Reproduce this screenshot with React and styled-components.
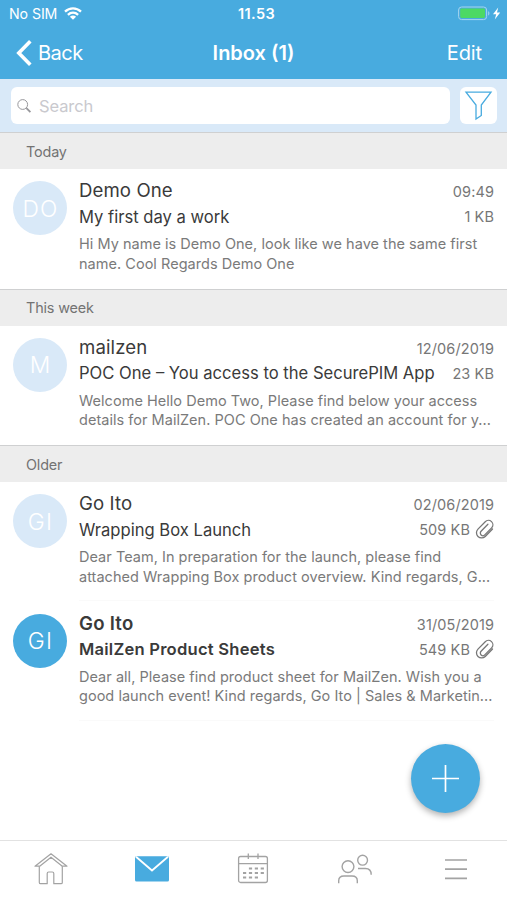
import React from 'react';
import styled, { createGlobalStyle } from 'styled-components';

const GlobalStyle = createGlobalStyle`
    * {
        box-sizing: border-box;
    }
    body {
        margin: 0;
        background: #fff;
        font-family: Inter, 'Liberation Sans', sans-serif;
    }
`;

const Screen = styled.div`
    position: relative;
    display: flex;
    flex-direction: column;
    width: 507px;
    height: 900px;
    overflow: hidden;
    background: #fff;
`;

const Header = styled.header`
    height: 79px;
    color: #fff;
    background: #48abdf;
`;

const StatusBar = styled.div`
    display: grid;
    grid-template-columns: 1fr auto 1fr;
    align-items: center;
    height: 27px;
    padding: 0 6px 0 9px;
    font-size: 14.5px;
`;

const Carrier = styled.div`
    display: flex;
    align-items: center;
    gap: 7px;
    font-size: 14.2px;
    letter-spacing: -0.1px;
`;

const Clock = styled.div`
    padding-left: 3px;
    font-weight: 600;
    font-size: 14.5px;
    letter-spacing: 0.4px;
`;

const Power = styled.div`
    display: flex;
    justify-content: flex-end;
`;

const NavBar = styled.nav`
    display: grid;
    grid-template-columns: 1fr auto 1fr;
    align-items: center;
    height: 52px;
    padding: 0 25px 0 16px;
`;

const NavButton = styled.button`
    display: flex;
    align-items: center;
    justify-self: ${props => props.$end ? 'end' : 'start'};
    gap: 6px;
    padding: 0;
    border: none;
    background: none;
    color: #fff;
    font-family: inherit;
    font-size: 20px;
    letter-spacing: ${props => props.$end ? '-0.1px' : '-0.5px'};
`;

const Title = styled.h1`
    margin: 0;
    padding-left: 9px;
    font-size: 20px;
    font-weight: 600;
    letter-spacing: 0;
`;

const SearchBar = styled.div`
    display: flex;
    gap: 10px;
    height: 53px;
    padding: 8px 10px 8px 11px;
    background: #d9e9f8;
`;

const SearchField = styled.label`
    display: flex;
    flex: 1;
    align-items: center;
    gap: 8px;
    padding-left: 6px;
    border-radius: 6px;
    background: #fff;
    color: #c9c9ce;
    font-size: 16.5px;
    letter-spacing: -0.1px;
`;

const FilterButton = styled.button`
    width: 37px;
    padding: 0;
    border: none;
    border-radius: 6px;
    background: #fff;
    color: #48abdf;
`;

const SectionHeader = styled.h2`
    display: flex;
    align-items: center;
    height: 37px;
    margin: 0;
    padding: 0 0 0 26px;
    border-top: 1.5px solid #cfd0d1;
    background: #ededed;
    color: #737373;
    font-size: 14.4px;
    font-weight: 400;
    letter-spacing: -0.15px;
`;

const Row = styled.article`
    display: flex;
    gap: 12px;
    height: 119.5px;
    padding: 12px 13px 0;
`;

const Avatar = styled.div`
    display: flex;
    flex: none;
    align-items: center;
    justify-content: center;
    width: 54px;
    height: 54px;
    padding-left: 1px;
    border-radius: 50%;
    background: ${props => props.$unread ? '#48abdf' : '#d9e9f8'};
    color: #fff;
    font-size: 22.8px;
    font-weight: 350;
    letter-spacing: 1.2px;
`;

const Body = styled.div`
    flex: 1;
    min-width: 0;
    height: 107px;
    border-bottom: ${props => props.$line ? '1px solid #fafafa' : 'none'};
`;

const Line = styled.div`
    display: flex;
    align-items: center;
    justify-content: space-between;
    height: ${props => props.$tall ? '18px' : '35px'};
    white-space: nowrap;
`;

const Sender = styled.span`
    color: #3a3a3a;
    font-size: 18.6px;
    font-weight: ${props => props.$unread ? 600 : 400};
    letter-spacing: ${props => props.$unread ? '0.25px' : '0.1px'};
`;

const Subject = styled.span`
    color: #3a3a3a;
    font-size: 16.6px;
    font-weight: ${props => props.$unread ? 600 : 400};
    letter-spacing: ${props => props.$unread ? '0.22px' : '0'};
`;

const Meta = styled.span`
    display: flex;
    align-items: center;
    gap: 6px;
    color: #777;
    font-size: 14.5px;
    letter-spacing: 0.1px;
`;

const DateMeta = styled(Meta)`
    padding-top: 3px;
`;

const Preview = styled.p`
    margin: 0;
    color: #7a7a7a;
    font-size: 14.5px;
    line-height: 19.7px;
    letter-spacing: 0.03px;
    white-space: nowrap;
`;

const PreviewLine = styled.span`
    display: block;
`;

const ComposeButton = styled.button`
    position: absolute;
    right: 27px;
    bottom: 87px;
    width: 69px;
    height: 69px;
    padding: 0;
    border: none;
    border-radius: 50%;
    background: #48abdf;
    color: #fff;
    box-shadow: 0 3px 6px rgba(0, 0, 0, 0.3);
`;

const TabBar = styled.nav`
    display: grid;
    grid-template-columns: repeat(5, 1fr);
    height: 60px;
    margin-top: auto;
    padding-top: 8px;
    border-top: 1.5px solid #e2e2e2;
    background: #fff;
`;

const Tab = styled.button`
    display: flex;
    justify-content: center;
    padding: 0;
    border: none;
    background: none;
    color: ${props => props.$active ? '#48abdf' : '#a3a3a3'};
`;

const Icon = styled.svg`
    display: block;
    flex: none;
    fill: none;
    stroke: currentColor;
    overflow: visible;
`;

const SearchIcon = styled(Icon)`
    color: #97979b;
`;

const sections = [
    {
        title: 'Today',
        mails: [
            {
                initials: 'DO', from: 'Demo One', date: '09:49', size: '1 KB',
                subject: 'My first day a work',
                preview: ['Hi My name is Demo One, look like we have the same first', 'name. Cool Regards Demo One'],
            },
        ],
    },
    {
        title: 'This week',
        mails: [
            {
                initials: 'M', from: 'mailzen', date: '12/06/2019', size: '23 KB',
                subject: 'POC One – You access to the SecurePIM App',
                preview: ['Welcome Hello Demo Two, Please find below your access', 'details for MailZen. POC One has created an account for y...'],
            },
        ],
    },
    {
        title: 'Older',
        mails: [
            {
                initials: 'GI', from: 'Go Ito', date: '02/06/2019', size: '509 KB', attachment: true,
                subject: 'Wrapping Box Launch', line: true,
                preview: ['Dear Team, In preparation for the launch, please find', 'attached Wrapping Box product overview. Kind regards, G...'],
            },
            {
                initials: 'GI', from: 'Go Ito', date: '31/05/2019', size: '549 KB', attachment: true, unread: true,
                subject: 'MailZen Product Sheets', line: true,
                preview: ['Dear all, Please find product sheet for MailZen. Wish you a', 'good launch event! Kind regards, Go Ito | Sales & Marketin...'],
            },
        ],
    },
];

function WifiIcon() {
    return (
        <Icon width="18" height="13" viewBox="0 0 18 13" strokeWidth="2.3">
            <path d="M1 4.6C5.6.2 12.4.2 17 4.6" />
            <path d="M3.9 7.9C6.9 5 11.1 5 14.1 7.9" />
            <path d="M9 12.7 5.9 9.7C7.7 8 10.3 8 12.1 9.7Z" fill="currentColor" stroke="none" />
        </Icon>
    );
}

function BatteryIcon() {
    return (
        <Icon width="43" height="15" viewBox="0 0 43 15">
            <rect x=".6" y="1" width="28" height="12.6" rx="3" stroke="#a5d5ef" strokeWidth="1" />
            <rect x="2.2" y="2.6" width="24.8" height="9.4" rx="1.4" fill="#4cd964" stroke="none" />
            <path d="M30.2 5.2c1.6.5 1.6 3.7 0 4.2z" fill="#a5d5ef" stroke="none" />
            <path d="M40.2 1.4 35 8.3h3.2l-1.4 5.3 5.4-7H39z" fill="currentColor" stroke="none" />
        </Icon>
    );
}

function ClipIcon() {
    return (
        <Icon width="18" height="18.5" viewBox="1.5 1.2 21 21.5" preserveAspectRatio="none" strokeWidth="1.5" strokeLinecap="round">
            <path d="m20.8 11.7-8.5 8.6a6 6 0 0 1-8.5-8.5l8.5-8.6a5.1 5.1 0 0 1 7.4 7.2l-8 8.1a3 3 0 0 1-4.3-4.2l8-8.1" />
        </Icon>
    );
}

function MailRow({ mail }) {
    return (
        <Row>
            <Avatar $unread={mail.unread}>{mail.initials}</Avatar>
            <Body $line={mail.line}>
                <Line $tall>
                    <Sender $unread={mail.unread}>{mail.from}</Sender>
                    <DateMeta>{mail.date}</DateMeta>
                </Line>
                <Line>
                    <Subject $unread={mail.unread}>{mail.subject}</Subject>
                    <Meta>
                        {mail.size}
                        {mail.attachment && <ClipIcon />}
                    </Meta>
                </Line>
                <Preview>
                    {mail.preview.map(line => <PreviewLine key={line}>{line}</PreviewLine>)}
                </Preview>
            </Body>
        </Row>
    );
}

function App() {
    return (
        <Screen>
            <GlobalStyle />
            <Header>
                <StatusBar>
                    <Carrier>No SIM <WifiIcon /></Carrier>
                    <Clock>11.53</Clock>
                    <Power><BatteryIcon /></Power>
                </StatusBar>
                <NavBar>
                    <NavButton>
                        <Icon width="16" height="26" viewBox="0 0 16 26" strokeWidth="3.6">
                            <path d="M14.3 1.3 2.8 13l11.5 11.7" />
                        </Icon>
                        Back
                    </NavButton>
                    <Title>Inbox (1)</Title>
                    <NavButton $end>Edit</NavButton>
                </NavBar>
            </Header>

            <SearchBar>
                <SearchField>
                    <SearchIcon width="14" height="14" viewBox="0 0 14 14">
                        <circle cx="5.7" cy="5.5" r="4.9" strokeWidth="1" />
                        <path d="m9.4 9.2 4 4" strokeWidth="1.8" />
                    </SearchIcon>
                    Search
                </SearchField>
                <FilterButton>
                    <Icon width="37" height="37" viewBox="0 0 37 37" strokeWidth="1.3">
                        <path d="M6 5.2h25L21.3 18v10.5l-5.3 3.5V18z" />
                    </Icon>
                </FilterButton>
            </SearchBar>

            {sections.map(section => (
                <section key={section.title}>
                    <SectionHeader>{section.title}</SectionHeader>
                    {section.mails.map(mail => <MailRow key={mail.date} mail={mail} />)}
                </section>
            ))}

            <ComposeButton>
                <Icon width="69" height="69" viewBox="0 0 69 69" strokeWidth="1.7">
                    <path d="M34.5 21v27M21 34.5h27" />
                </Icon>
            </ComposeButton>

            <TabBar>
                <Tab>
                    <Icon width="34" height="40" viewBox="0 0 34 40" strokeWidth="1.2" strokeLinejoin="round">
                        <path d="M1 17.2 17 4.8l16 12.4h-4.7L17 8.2 5.7 17.2z" />
                        <path d="M5.3 17.2v16.2q0 1.3 1.3 1.3h6.6V24.5q0-1.5 1.5-1.5h3.6q1.5 0 1.5 1.5v10.2h7.2q1.3 0 1.3-1.3V17.2" />
                    </Icon>
                </Tab>
                <Tab $active>
                    <Icon width="34" height="40" viewBox="0 0 34 40">
                        <rect x="0" y="7.2" width="34" height="25.3" rx="1.5" fill="currentColor" stroke="none" />
                        <path d="m1 7.7 16 13.8L33 7.7" stroke="#fff" strokeWidth="1.8" />
                    </Icon>
                </Tab>
                <Tab>
                    <Icon width="30" height="40" viewBox="0 0 30 40" strokeWidth="1.3">
                        <rect x=".6" y="7.5" width="28.8" height="26" rx="2" />
                        <path d="M.6 14.6h28.8M10.3 4.5v5.5M20 4.5v5.5" />
                        <path d="M10.9 19.5h15M5 24h21M5 28.5h15" strokeWidth="2.2" strokeDasharray="3.2 2.7" />
                    </Icon>
                </Tab>
                <Tab>
                    <Icon width="34" height="40" viewBox="0 0 34 40" strokeWidth="1.4">
                        <circle cx="10" cy="17.6" r="5.9" />
                        <circle cx="24.6" cy="11.2" r="4.9" />
                        <path d="M.7 34.2v-2.4Q.7 27 6 27h8q5.3 0 5.3 4.8v2.4" />
                        <path d="M20 19.5h7.5q5.7 0 5.7 6.2" />
                    </Icon>
                </Tab>
                <Tab>
                    <Icon width="22" height="40" viewBox="0 0 22 40" strokeWidth="1.7">
                        <path d="M0 11h22M0 20.1h22M0 29.3h22" />
                    </Icon>
                </Tab>
            </TabBar>
        </Screen>
    );
}

export default App;
